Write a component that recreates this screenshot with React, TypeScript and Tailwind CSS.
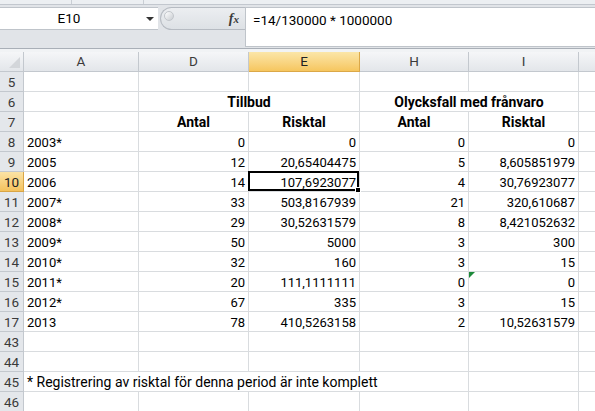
import React from "react";

type Cell = {
  w: string;
  t?: string;
  a?: "l" | "r" | "c";
  b?: boolean;
  open?: boolean;
  sel?: boolean;
  flag?: boolean;
};

const W = {
  A: "w-[115px]",
  D: "w-[110px]",
  E: "w-[111px]",
  H: "w-[109px]",
  I: "w-[110px]",
  X: "w-[40px]",
};

const data: [string, string, string, string, string, string][] = [
  ["8", "2003*", "0", "0", "0", "0"],
  ["9", "2005", "12", "20,65404475", "5", "8,605851979"],
  ["10", "2006", "14", "107,6923077", "4", "30,76923077"],
  ["11", "2007*", "33", "503,8167939", "21", "320,610687"],
  ["12", "2008*", "29", "30,52631579", "8", "8,421052632"],
  ["13", "2009*", "50", "5000", "3", "300"],
  ["14", "2010*", "32", "160", "3", "15"],
  ["15", "2011*", "20", "111,1111111", "0", "0"],
  ["16", "2012*", "67", "335", "3", "15"],
  ["17", "2013", "78", "410,5263158", "2", "10,52631579"],
];

function empty(): Cell[] {
  return [{ w: W.A }, { w: W.D }, { w: W.E }, { w: W.H }, { w: W.I }, { w: W.X }];
}

const rows: { n: string; cells: Cell[] }[] = [
  { n: "5", cells: empty() },
  {
    n: "6",
    cells: [
      { w: W.A },
      { w: "w-[221px]", t: "Tillbud", a: "c", b: true },
      { w: "w-[219px]", t: "Olycksfall med frånvaro", a: "c", b: true },
      { w: W.X },
    ],
  },
  {
    n: "7",
    cells: [
      { w: W.A },
      { w: W.D, t: "Antal", a: "c", b: true },
      { w: W.E, t: "Risktal", a: "c", b: true },
      { w: W.H, t: "Antal", a: "c", b: true },
      { w: W.I, t: "Risktal", a: "c", b: true },
      { w: W.X },
    ],
  },
  ...data.map(([n, a, d, e, h, i]) => ({
    n,
    cells: [
      { w: W.A, t: a, a: "l" as const },
      { w: W.D, t: d, a: "r" as const },
      { w: W.E, t: e, a: "r" as const, sel: n === "10" },
      { w: W.H, t: h, a: "r" as const },
      { w: W.I, t: i, a: "r" as const, flag: n === "15" },
      { w: W.X },
    ],
  })),
  { n: "43", cells: empty() },
  { n: "44", cells: empty() },
  {
    n: "45",
    cells: [
      { w: W.A, t: "* Registrering av risktal för denna period är inte komplett", a: "l", open: true },
      { w: W.D, open: true },
      { w: W.E, open: true },
      { w: W.H },
      { w: W.I },
      { w: W.X },
    ],
  },
  { n: "46", cells: empty() },
];

function GridCell({ c }: { c: Cell }) {
  return (
    <div
      className={`${c.w} relative h-full shrink-0 border-b border-[#d9dcdf] px-[3px] flex items-center pt-[2px] whitespace-nowrap ${
        c.open ? "" : "border-r"
      } ${c.a === "r" ? "justify-end" : c.a === "c" ? "justify-center" : "justify-start"} ${
        c.b ? "font-bold text-[14px]" : ""
      } ${c.open && c.t ? "text-[14px]" : ""}`}
    >
      {c.t && <span className="relative z-10">{c.t}</span>}
      {c.sel && (
        <div className="absolute -left-[1px] -top-[1px] -right-[0px] -bottom-[0px] border-2 border-black z-20">
          <div className="absolute -right-[4px] -bottom-[4px] w-[6px] h-[6px] bg-black border border-white" />
        </div>
      )}
      {c.flag && (
        <div className="absolute left-0 top-0 w-0 h-0 border-t-[6px] border-r-[6px] border-t-[#1d8a3a] border-r-transparent" />
      )}
    </div>
  );
}

function RowHead({ n, active }: { n: string; active?: boolean }) {
  return (
    <div
      className={`w-[24px] h-full shrink-0 flex items-center justify-center pt-[1px] border-r border-b text-[13.5px] ${
        active
          ? "bg-gradient-to-b from-[#fbe3a4] to-[#f4c25c] border-[#d9a545] text-[#222]"
          : "bg-[#e4e7eb] border-[#c3c8ce] text-[#3a3a3a]"
      }`}
    >
      {n}
    </div>
  );
}

function ColHead({ w, label, active }: { w: string; label: string; active?: boolean }) {
  return (
    <div
      className={`${w} h-full shrink-0 flex items-center justify-center border-r border-b text-[13.5px] ${
        active
          ? "bg-gradient-to-b from-[#fbe6a8] to-[#f6c65e] border-[#dba848] text-[#222]"
          : "bg-gradient-to-b from-[#f5f6f8] to-[#e3e6ea] border-[#c3c8ce] text-[#3a3a3a]"
      }`}
    >
      {label}
    </div>
  );
}

export default function App() {
  return (
    <div
      className="w-[595px] h-[411px] overflow-hidden bg-white text-[13px] text-black"
      style={{ fontFamily: "Roboto, 'Liberation Sans', sans-serif" }}
    >
      {/* ribbon edge */}
      <div className="h-[5px] bg-[#eceff2] border-b border-[#c2c7ce] flex">
        <div className="w-[72px] border-r border-[#c9ced4]" />
        <div className="w-[72px] border-r border-[#c9ced4]" />
      </div>

      {/* formula bar */}
      <div className="h-[44px] bg-[#e1e4e8] border-b border-[#a9afb7] pt-[2px] flex">
        <div className="flex flex-col w-[245px] shrink-0">
          <div className="h-[23px] flex">
            <div className="w-[158px] bg-white border-y border-[#bfc4ca] flex items-center relative">
              <span className="w-full text-center pr-[20px] text-[13.5px]">E10</span>
              <div className="absolute right-[4px] top-[9px] w-0 h-0 border-x-[4px] border-x-transparent border-t-[4px] border-t-[#333]" />
            </div>
            <div className="flex-1 ml-[2px] rounded-l-full bg-gradient-to-b from-[#eceef1] to-[#dde1e5] border border-r-0 border-[#b6bbc2] flex items-center relative">
              <div className="absolute left-[3px] top-[3px] w-[10px] h-[10px] rounded-full bg-gradient-to-br from-white to-[#c9cdd2] border border-[#c2c6cb]" />
              <span
                className="ml-auto mr-[6px] italic font-bold text-[14px] text-[#3b3b3b]"
                style={{ fontFamily: "'Liberation Serif', serif" }}
              >
                f<span className="text-[11px]">x</span>
              </span>
            </div>
          </div>
        </div>
        <div className="flex-1 h-[40px] bg-white border border-r-0 border-[#bfc4ca] px-[7px] pt-[2px] text-[13.5px]">
          =14/130000 * 1000000
        </div>
      </div>

      <div className="h-[3px] bg-[#f1f3f5]" />

      {/* column header */}
      <div className="h-[20px] flex">
        <div className="w-[24px] h-full shrink-0 bg-gradient-to-b from-[#f5f6f8] to-[#e3e6ea] border-r border-b border-[#c3c8ce] relative">
          <div className="absolute right-[3px] bottom-[3px] w-0 h-0 border-l-[11px] border-l-transparent border-b-[11px] border-b-[#d3d6da]" />
        </div>
        <ColHead w={W.A} label="A" />
        <ColHead w={W.D} label="D" />
        <ColHead w={W.E} label="E" active />
        <ColHead w={W.H} label="H" />
        <ColHead w={W.I} label="I" />
        <ColHead w={W.X} label="" />
      </div>

      {rows.map((r) => (
        <div key={r.n} className="h-[20px] flex">
          <RowHead n={r.n} active={r.n === "10"} />
          {r.cells.map((c, i) => (
            <GridCell key={i} c={c} />
          ))}
        </div>
      ))}
    </div>
  );
}
